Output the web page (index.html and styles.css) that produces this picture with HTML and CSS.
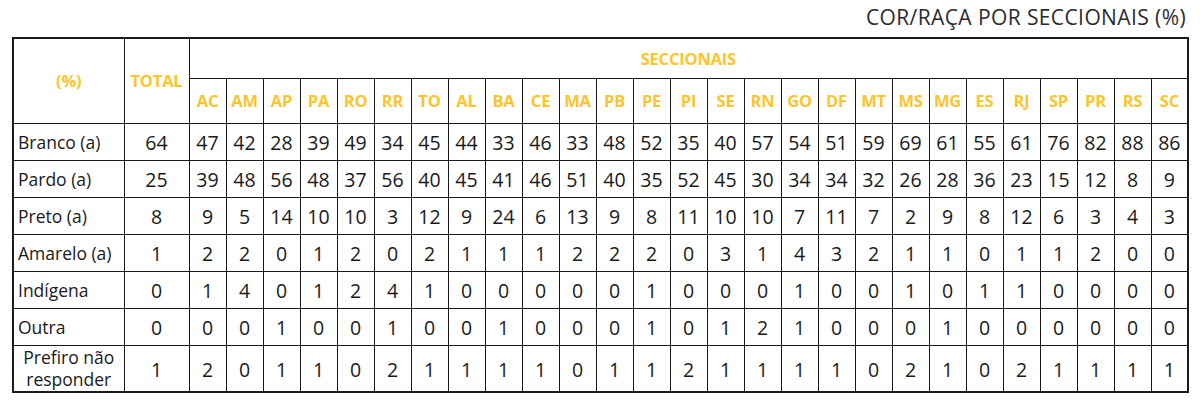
FILE: index.html
```html
<!DOCTYPE html>
<html lang="pt">
<head>
<meta charset="utf-8">
<title>Cor/Raça por seccionais</title>
<link rel="stylesheet" href="styles.css">
</head>
<body>
<div class="page">
  <div class="title-bar"><h1 class="title">COR/RAÇA POR SECCIONAIS (%)</h1></div>
  <table class="grid">
    <colgroup>
      <col class="c-label"><col class="c-total">
      <col class="c-uf"><col class="c-uf"><col class="c-uf"><col class="c-uf"><col class="c-uf"><col class="c-uf"><col class="c-uf"><col class="c-uf"><col class="c-uf"><col class="c-uf"><col class="c-uf"><col class="c-uf"><col class="c-uf"><col class="c-uf"><col class="c-uf"><col class="c-uf"><col class="c-uf"><col class="c-uf"><col class="c-uf"><col class="c-uf"><col class="c-uf"><col class="c-uf"><col class="c-uf"><col class="c-uf"><col class="c-uf"><col class="c-uf"><col class="c-uf">
    </colgroup>
    <thead>
      <tr class="h1">
        <th rowspan="2" class="hd">(%)</th>
        <th rowspan="2" class="hd">TOTAL</th>
        <th colspan="27" class="hd">SECCIONAIS</th>
      </tr>
      <tr class="h2">
        <th class="hd">AC</th><th class="hd">AM</th><th class="hd">AP</th><th class="hd">PA</th><th class="hd">RO</th><th class="hd">RR</th><th class="hd">TO</th><th class="hd">AL</th><th class="hd">BA</th><th class="hd">CE</th><th class="hd">MA</th><th class="hd">PB</th><th class="hd">PE</th><th class="hd">PI</th><th class="hd">SE</th><th class="hd">RN</th><th class="hd">GO</th><th class="hd">DF</th><th class="hd">MT</th><th class="hd">MS</th><th class="hd">MG</th><th class="hd">ES</th><th class="hd">RJ</th><th class="hd">SP</th><th class="hd">PR</th><th class="hd">RS</th><th class="hd">SC</th>
      </tr>
    </thead>
    <tbody>
      <tr class="row"><td class="lbl">Branco (a)</td><td>64</td><td>47</td><td>42</td><td>28</td><td>39</td><td>49</td><td>34</td><td>45</td><td>44</td><td>33</td><td>46</td><td>33</td><td>48</td><td>52</td><td>35</td><td>40</td><td>57</td><td>54</td><td>51</td><td>59</td><td>69</td><td>61</td><td>55</td><td>61</td><td>76</td><td>82</td><td>88</td><td>86</td></tr>
      <tr class="row"><td class="lbl">Pardo (a)</td><td>25</td><td>39</td><td>48</td><td>56</td><td>48</td><td>37</td><td>56</td><td>40</td><td>45</td><td>41</td><td>46</td><td>51</td><td>40</td><td>35</td><td>52</td><td>45</td><td>30</td><td>34</td><td>34</td><td>32</td><td>26</td><td>28</td><td>36</td><td>23</td><td>15</td><td>12</td><td>8</td><td>9</td></tr>
      <tr class="row"><td class="lbl">Preto (a)</td><td>8</td><td>9</td><td>5</td><td>14</td><td>10</td><td>10</td><td>3</td><td>12</td><td>9</td><td>24</td><td>6</td><td>13</td><td>9</td><td>8</td><td>11</td><td>10</td><td>10</td><td>7</td><td>11</td><td>7</td><td>2</td><td>9</td><td>8</td><td>12</td><td>6</td><td>3</td><td>4</td><td>3</td></tr>
      <tr class="row"><td class="lbl">Amarelo (a)</td><td>1</td><td>2</td><td>2</td><td>0</td><td>1</td><td>2</td><td>0</td><td>2</td><td>1</td><td>1</td><td>1</td><td>2</td><td>2</td><td>2</td><td>0</td><td>3</td><td>1</td><td>4</td><td>3</td><td>2</td><td>1</td><td>1</td><td>0</td><td>1</td><td>1</td><td>2</td><td>0</td><td>0</td></tr>
      <tr class="row"><td class="lbl">Indígena</td><td>0</td><td>1</td><td>4</td><td>0</td><td>1</td><td>2</td><td>4</td><td>1</td><td>0</td><td>0</td><td>0</td><td>0</td><td>0</td><td>1</td><td>0</td><td>0</td><td>0</td><td>1</td><td>0</td><td>0</td><td>1</td><td>0</td><td>1</td><td>1</td><td>0</td><td>0</td><td>0</td><td>0</td></tr>
      <tr class="row"><td class="lbl">Outra</td><td>0</td><td>0</td><td>0</td><td>1</td><td>0</td><td>0</td><td>1</td><td>0</td><td>0</td><td>1</td><td>0</td><td>0</td><td>0</td><td>1</td><td>0</td><td>1</td><td>2</td><td>1</td><td>0</td><td>0</td><td>0</td><td>1</td><td>0</td><td>0</td><td>0</td><td>0</td><td>0</td><td>0</td></tr>
      <tr class="row last"><td class="lbl lbl-center">Prefiro não<br>responder</td><td>1</td><td>2</td><td>0</td><td>1</td><td>1</td><td>0</td><td>2</td><td>1</td><td>1</td><td>1</td><td>1</td><td>0</td><td>1</td><td>1</td><td>2</td><td>1</td><td>1</td><td>1</td><td>1</td><td>0</td><td>2</td><td>1</td><td>0</td><td>2</td><td>1</td><td>1</td><td>1</td><td>1</td></tr>
    </tbody>
  </table>
</div>
</body>
</html>
```

FILE: styles.css
```css
html, body {
  margin: 0;
  padding: 0;
  background: #ffffff;
}

.page {
  font-family: "Open Sans", "Noto Sans", sans-serif;
  color: #1a1a1a;
  padding: 0 14px 0 12px;
}

.title-bar {
  display: flex;
  justify-content: flex-end;
  height: 37px;
}

.title {
  margin: 3px 0 0;
  font-size: 21px;
  font-weight: 500;
  line-height: 28px;
  color: #2b2b2b;
  letter-spacing: 0.4px;
}

.grid {
  width: 1175px;
  table-layout: fixed;
  border-collapse: collapse;
  border: 2px solid #1a1a1a;
}

.c-label { width: 111px; }
.c-total { width: 65px; }
.c-uf { width: 37px; }

.grid th,
.grid td {
  border: 1px solid #1a1a1a;
  padding: 0;
  text-align: center;
  vertical-align: middle;
}

.hd {
  color: #fdc42b;
  font-weight: 700;
  font-size: 16.5px;
  letter-spacing: -0.2px;
}

.h1 { height: 40px; }
.h2 { height: 45px; }

.row { height: 37px; }
.row.last { height: 47px; }

.row td {
  font-size: 19.5px;
  font-weight: 500;
  color: #1a1a1a;
  padding-top: 2px;
}

.row td.lbl {
  text-align: left;
  padding: 0 0 0 4px;
  font-size: 17.5px;
  white-space: nowrap;
}

.row td.lbl-center {
  text-align: center;
  padding: 0;
  line-height: 22px;
}
```
